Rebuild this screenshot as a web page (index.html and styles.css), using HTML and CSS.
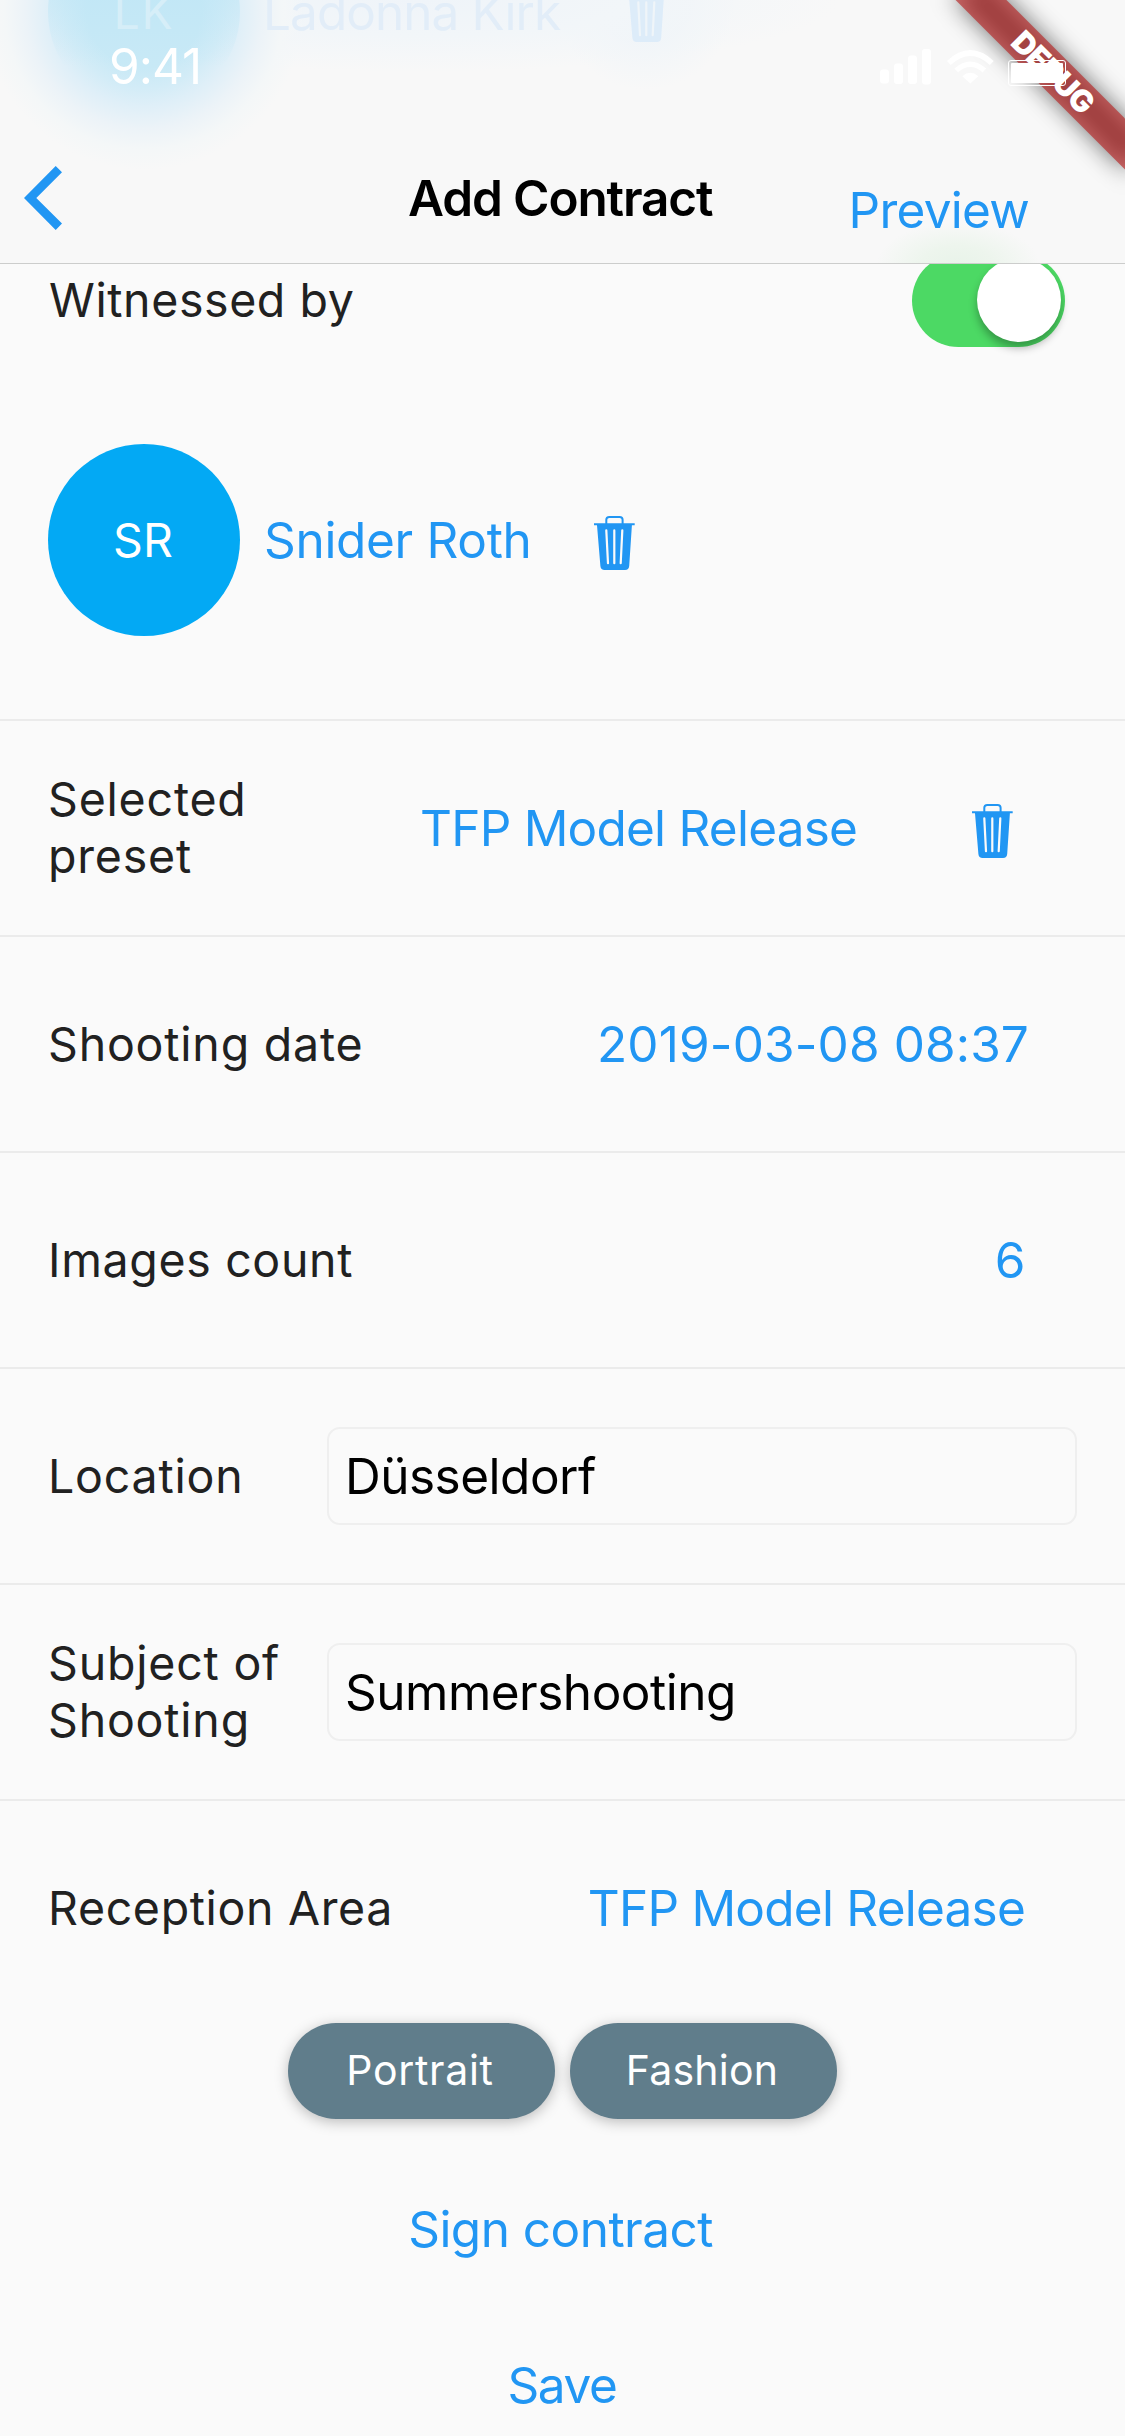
FILE: index.html
```html
<!DOCTYPE html>
<html lang="en">
<head>
<meta charset="utf-8">
<title>Add Contract</title>
<link rel="stylesheet" href="styles.css">
</head>
<body>
<svg class="defs" aria-hidden="true">
  <symbol id="trash" viewBox="0 -6 41 60">
    <path d="M12.300 8V3.800Q12.300 1 15.300 1h10.300q3 0 3 2.800V8" fill="none" stroke="currentColor" stroke-width="2"/>
    <path d="M0 7.200h40.700v2h-2.800L35.200 50q-.3 4-4.200 4H10.700Q6.700 54 6.400 50L3 9.200H0z" fill="currentColor"/>
    <path class="slits" d="M12.300 14.400 14 47.200M20.300 14.400v32.800M28.300 14.400 26.700 47.200" fill="none" stroke-width="2.200" stroke-linecap="round"/>
  </symbol>
</svg>
<div class="screen">
  <header class="header">
    <div class="ghost">
      <span class="ghost-avatar">LK</span>
      <span class="ghost-name">Ladonna Kirk</span>
      <svg class="trash"><use href="#trash"/></svg>
    </div>
    <div class="status">
      <span class="time">9:41</span>
      <svg class="icons" width="192" height="40" viewBox="0 0 192 40" fill="#fff">
        <rect x="0" y="23.500" width="9" height="14" rx="3"/>
        <rect x="14" y="17.500" width="9" height="20.500" rx="3"/>
        <rect x="28" y="9.500" width="9" height="28.500" rx="3"/>
        <rect x="42" y="3" width="9" height="35.500" rx="3"/>
        <path d="M90.300 37.500 82.300 30.200q8-6.700 16 0z"/>
        <path d="M76.200 24.500q14.100-12.500 28.200 0M68.800 17q21.500-20 43 0" fill="none" stroke="#fff" stroke-width="5.500"/>
        <rect x="128.500" y="14.500" width="57" height="25" rx="2.500" fill="none" stroke="#fff"/>
        <rect x="131" y="17" width="52" height="20" rx="1"/>
      </svg>
    </div>
    <nav class="nav">
      <svg class="back" width="38" height="64" viewBox="0 0 38 64"><path d="M31.700 0 38 6.200 12.300 32 38 57.600 31.700 64 0 32z" fill="#2196f3"/></svg>
      <h1 class="title">Add Contract</h1>
      <a class="preview">Preview</a>
    </nav>
    <div class="banner">DEBUG</div>
  </header>

  <main class="form">
    <div class="row witness"><label class="label">Witnessed by</label><span class="switch"></span></div>
    <div class="person">
      <span class="avatar">SR</span>
      <a class="value name">Snider Roth</a>
      <svg class="trash"><use href="#trash"/></svg>
    </div>
    <div class="row lined preset"><label class="label">Selected preset</label><a class="value tfp">TFP Model Release</a><svg class="trash"><use href="#trash"/></svg></div>
    <div class="row lined shooting"><label class="label">Shooting date</label><a class="value date">2019-03-08 08:37</a></div>
    <div class="row lined"><label class="label count">Images count</label><a class="value">6</a></div>
    <div class="row lined text"><label class="label">Location</label><input class="field" value="Düsseldorf"></div>
    <div class="row lined text"><label class="label">Subject of Shooting</label><input class="field" value="Summershooting"></div>
    <div class="row lined"><label class="label area">Reception Area</label><a class="value tfp">TFP Model Release</a></div>
    <div class="chips"><span class="chip portrait">Portrait</span><span class="chip">Fashion</span></div>
    <div class="actions">
      <a class="value sign">Sign contract</a>
      <a class="value save">Save</a>
    </div>
  </main>
</div>
</body>
</html>
```
FILE: styles.css
```css
* { box-sizing: border-box; }
body {
  margin: 0;
  background: #fafafa;
  font-family: Inter, "Liberation Sans", sans-serif;
  color: #212121;
}
.defs { position: absolute; width: 0; height: 0; }
.screen { position: relative; width: 1125px; height: 2436px; overflow: hidden; }

/* Translucent navigation bar over the scrolled form */
.header {
  position: absolute;
  z-index: 2;
  top: 0;
  left: 0;
  width: 1125px;
  height: 264px;
  overflow: hidden;
  border-bottom: 1px solid #cccdcc;
  background:
    radial-gradient(ellipse 82px 44px at 958px 266px, #e8f3e9 0%, #edf5ed 45%, rgba(248,248,248,0) 100%),
    radial-gradient(circle 160px at 144px 10px, #c8e9f6 0%, #c8e9f6 36%, #d3ecf7 49%, #dfeff8 60%, #ecf3f8 74%, #f4f7f8 87%, rgba(248,248,248,0) 100%),
    radial-gradient(ellipse 420px 72px at 420px 0, #eff4f9 0%, #f2f6f9 50%, rgba(248,248,248,0) 100%),
    radial-gradient(circle 90px at 645px 0, #ebf3f9 0%, rgba(248,248,248,0) 100%),
    #f8f8f8;
}
.ghost {
  position: absolute;
  top: -84px;
  left: 48px;
  height: 192px;
  display: flex;
  align-items: center;
}
.ghost-avatar {
  width: 192px;
  height: 192px;
  border-radius: 50%;
  display: flex;
  align-items: center;
  justify-content: center;
  background: linear-gradient(rgba(190,230,246,.55) 84px, rgba(190,230,246,.3) 115px, rgba(190,230,246,0) 150px);
  color: #d6eef8;
  font-size: 46.500px;
  letter-spacing: 1.700px;
}
.ghost-name {
  width: 330px;
  margin-left: 23px;
  font-size: 49.500px;
  letter-spacing: -.95px;
  color: #e2edf8;
}
.ghost .trash { margin-left: 33px; color: #d9eafa; --paper: #eff5fa; opacity: .8; }

.status {
  position: relative;
  z-index: 2;
  display: flex;
  justify-content: space-between;
  height: 132px;
  padding: 0 53px 0 109px;
}
.time { font-size: 49.500px; line-height: 132px; letter-spacing: -.96px; color: #fff; }
.icons { margin-top: 46px; }
.nav {
  display: grid;
  grid-template-columns: 384px auto 1fr;
  align-items: center;
  height: 131px;
  padding: 0 96px 0 24px;
}
.title { margin: 0; font-size: 49.500px; line-height: 60px; font-weight: 600; letter-spacing: -1.120px; color: #000; }
.preview { justify-self: end; margin-top: 25px; font-size: 49.500px; line-height: 60px; letter-spacing: -.73px; color: #2196f3; }

.banner {
  position: absolute;
  left: 933px;
  top: 54px;
  width: 240px;
  height: 36px;
  transform: rotate(45deg);
  text-align: center;
  font-size: 30.600px;
  line-height: 36px;
  font-weight: 900;
  letter-spacing: -1px;
  color: #fff;
}
.banner::before, .banner::after { content: ""; position: absolute; inset: 0; z-index: -1; }
.banner::before { background: rgba(0,0,0,.55); filter: blur(12px); }
.banner::after { background: rgba(183,28,28,.627); }

.form { padding-top: 192px; display: flex; flex-direction: column; }
.row {
  display: flex;
  align-items: center;
  justify-content: space-between;
  height: 216px;
  padding: 0 100px 0 48px;
}
.lined { border-top: 2px solid #ebebeb; }
.label { font-size: 46.500px; line-height: 57px; letter-spacing: .8px; white-space: nowrap; }
.count, .area { letter-spacing: .65px; }
.witness { padding: 0 60px 0 49px; }
.witness .label { letter-spacing: .6px; }
.value { font-size: 49.500px; line-height: 60px; letter-spacing: -.5px; color: #2196f3; }
.tfp { letter-spacing: -.77px; }
.date { letter-spacing: .12px; }
.name { letter-spacing: -.31px; }
.sign { letter-spacing: -.53px; margin-right: 4px; }
.save { letter-spacing: -1.360px; margin-right: 1px; }
.shooting { padding-right: 96px; }

.switch {
  display: flex;
  justify-content: flex-end;
  width: 153px;
  height: 93px;
  padding: 4.500px;
  border-radius: 47px;
  background: #4cd964;
}
.switch::after {
  content: "";
  width: 84px;
  height: 84px;
  border-radius: 50%;
  background: #fff;
  box-shadow: 0 6px 8px rgba(0,0,0,.3);
}

.person { display: flex; align-items: center; height: 264px; margin-bottom: 47px; padding-left: 48px; }
.avatar {
  display: flex;
  align-items: center;
  justify-content: center;
  width: 192px;
  height: 192px;
  padding-right: 2px;
  border-radius: 50%;
  background: #03a9f4;
  color: #fff;
  font-size: 46.500px;
}
.person .value { width: 306px; margin-left: 24px; }
.person .trash { margin-left: 24px; }
.trash { flex: none; width: 41px; height: 60px; color: #2196f3; --paper: #fafafa; }
.slits { stroke: var(--paper); }

.preset { padding-right: 112px; }
.preset .label, .text .label { width: 279px; white-space: normal; flex: none; padding-right: 40px; }
.preset .tfp { margin-left: 93px; margin-right: auto; }
.text { justify-content: flex-start; padding-right: 48px; }
.field {
  flex: 1;
  min-width: 0;
  height: 98px;
  padding: 0 16px;
  border: 2px solid #efefef;
  border-radius: 13px;
  background: transparent;
  font: 49.500px Inter, "Liberation Sans", sans-serif;
  letter-spacing: -.5px;
  color: #000;
}

.chips { display: flex; justify-content: center; gap: 15px; margin-top: 8px; }
.chip {
  display: flex;
  align-items: center;
  justify-content: center;
  width: 267px;
  height: 96px;
  padding: 0 3px 2px 0;
  border-radius: 48px;
  background: #607d8b;
  box-shadow: 0 3px 14px rgba(0,0,0,.25);
  color: #fff;
  font-size: 41px;
  letter-spacing: .23px;
}
.portrait { letter-spacing: .68px; }
.actions { display: flex; flex-direction: column; align-items: center; gap: 96px; margin-top: 80px; }
```
